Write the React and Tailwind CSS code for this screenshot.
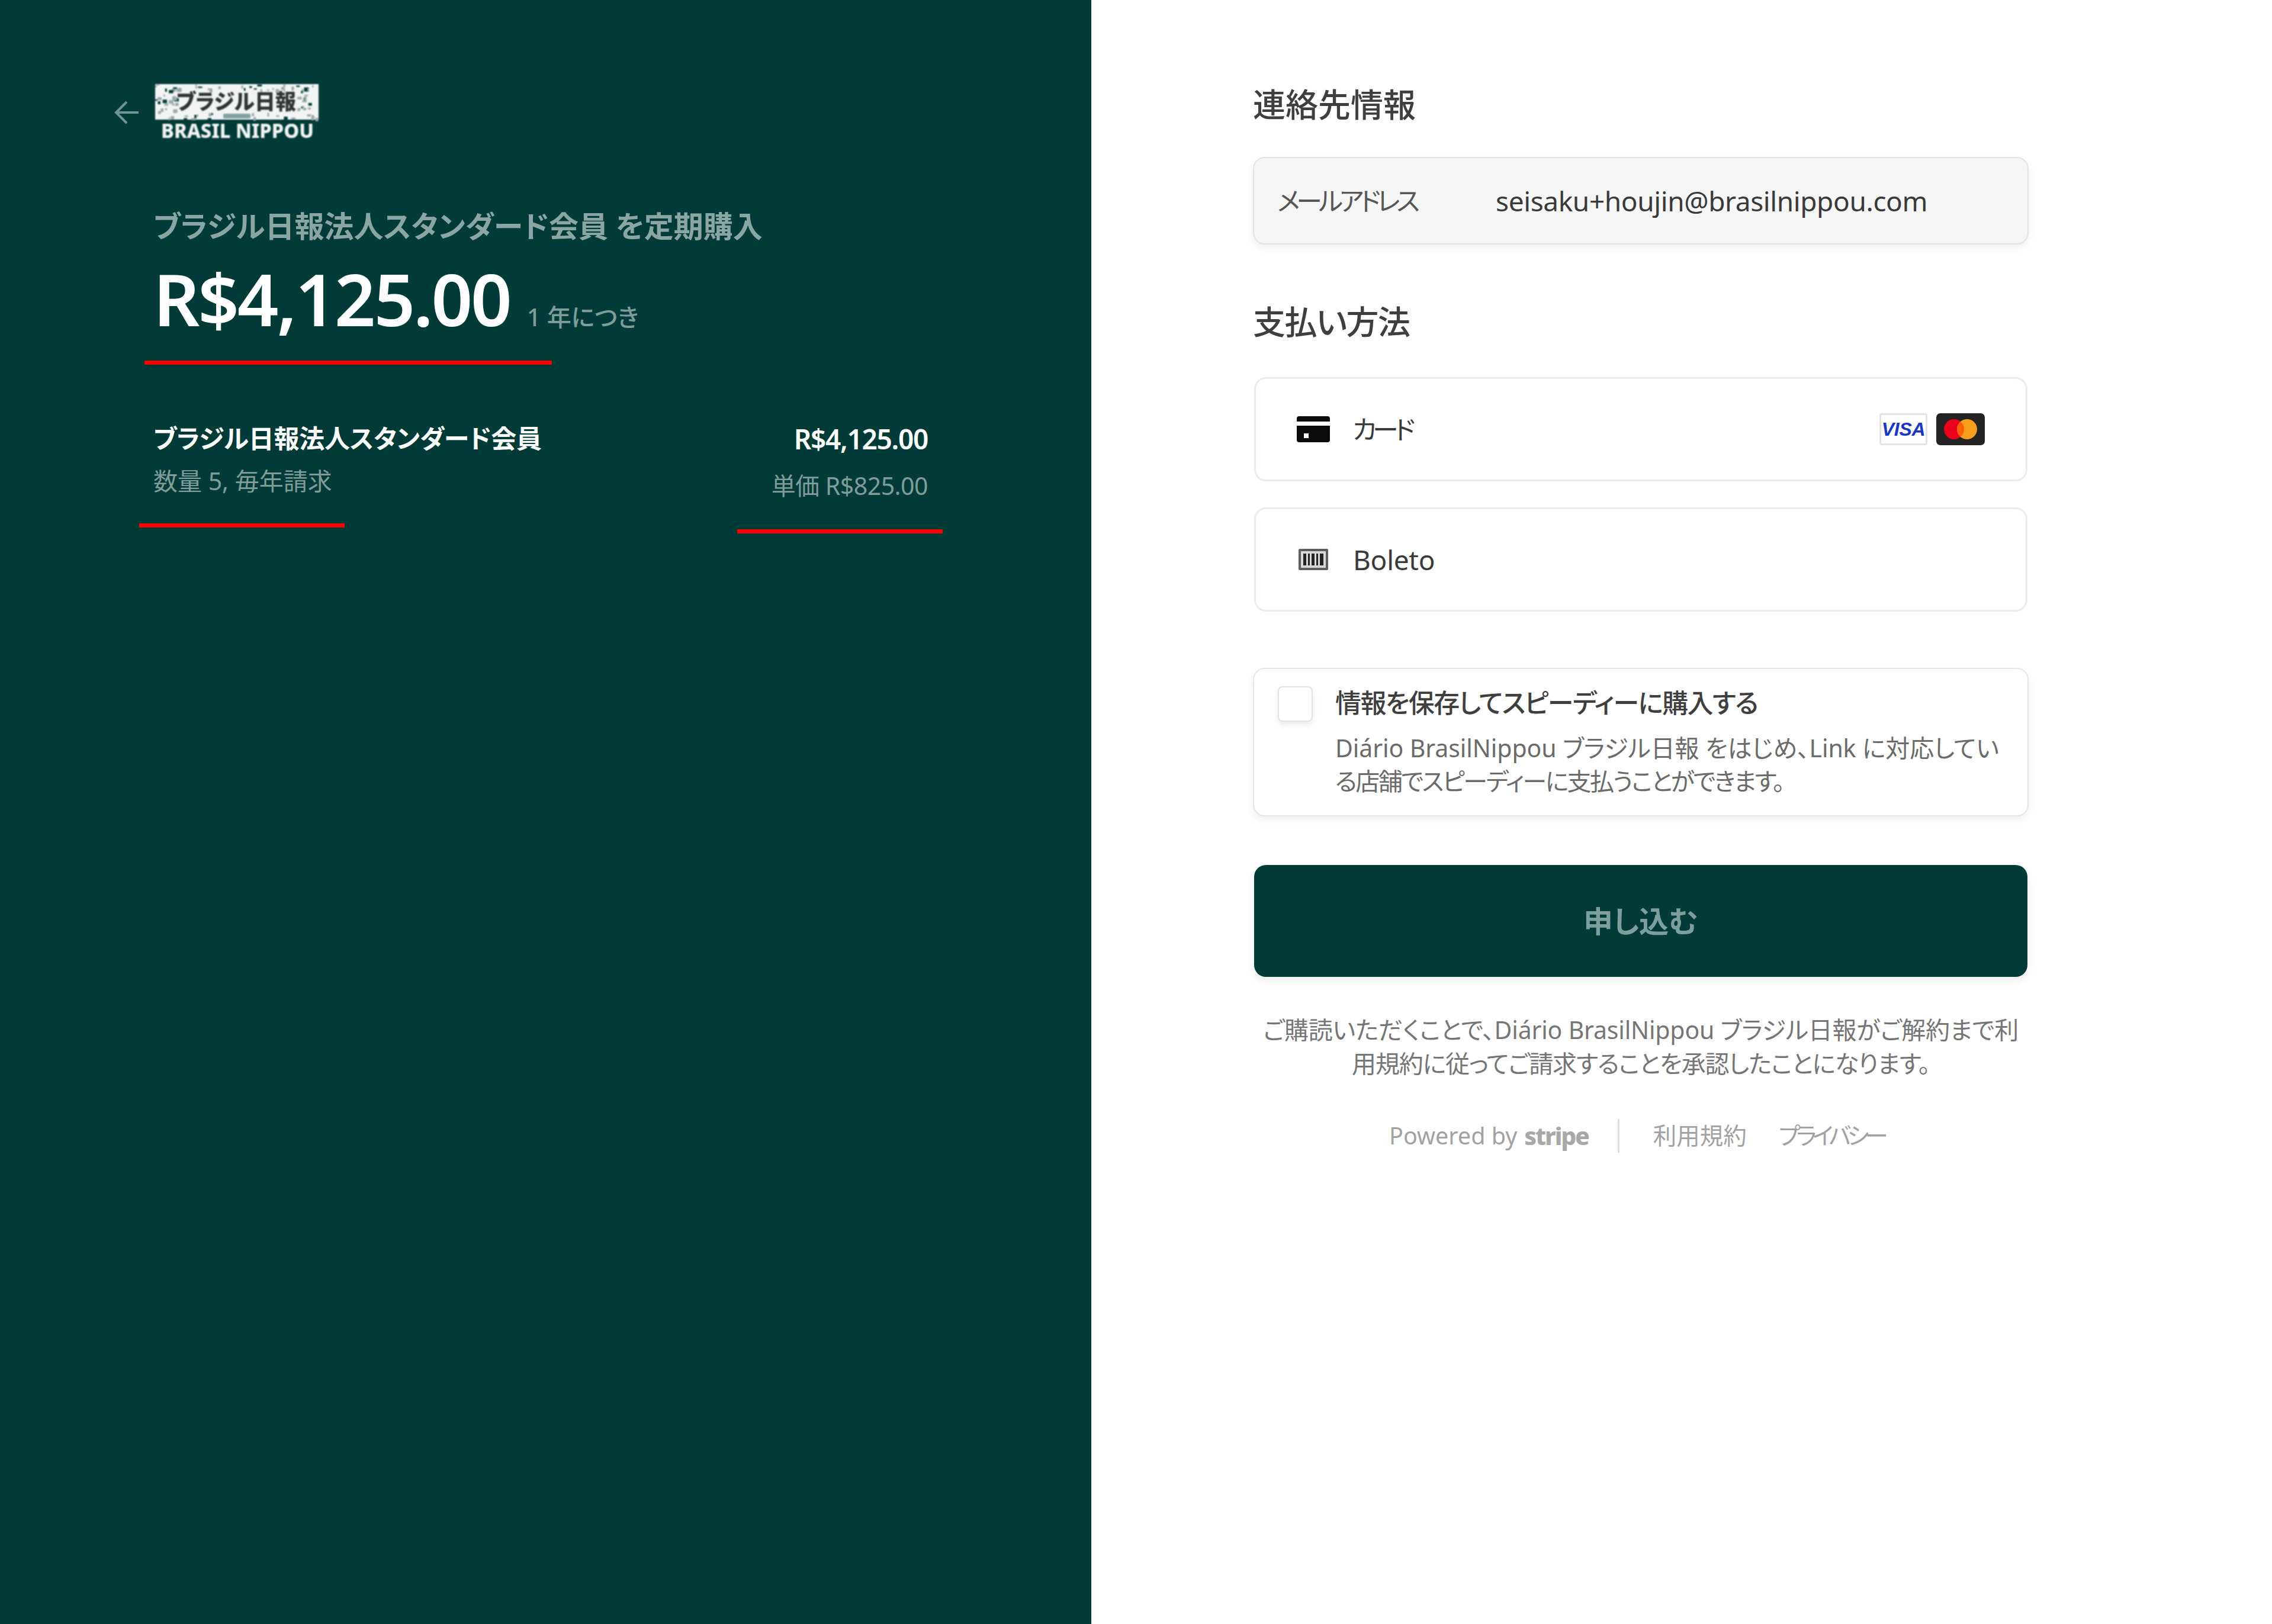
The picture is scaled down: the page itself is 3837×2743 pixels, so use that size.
import React from "react";

const font = "[font-family:'Noto_Sans','Noto_Sans_CJK_JP',sans-serif] [font-feature-settings:'palt']";

function Logo() {
  const blobs = [];
  let s = 11;
  const rnd = () => {
    s = (s * 16807) % 2147483647;
    return s / 2147483647;
  };
  for (let i = 0; i < 190; i++) {
    const x = rnd() * 272;
    const y = 2 + rnd() * 58;
    const w = 2 + rnd() * 6;
    const h = 2 + rnd() * 5;
    const c = rnd();
    if (x > 34 && x < 238 && y > 12 && y < 50) continue;
    blobs.push(<rect key={i} x={x} y={y} width={w} height={h} fill={c > 0.72 ? "#013b37" : "#9aa9a7"} />);
  }
  return (
    <svg width="278" height="104" viewBox="0 0 278 104" className="block blur-[1px]">
      <rect x="0" y="2" width="276" height="60" fill="#f2f4f3" />
      {blobs}
      <text x="36" y="45" fontSize="36" fontWeight="800" fill="#2f3534" fontFamily="'Noto Sans CJK JP',sans-serif" textLength="202" lengthAdjust="spacingAndGlyphs">ブラジル日報</text>
      <rect x="115" y="52" width="46" height="8" rx="2" fill="#7fa3a0" />
      <text x="10" y="93" fontSize="33" fontWeight="800" fill="#f2f4f3" fontFamily="'Noto Sans',sans-serif" textLength="258" lengthAdjust="spacingAndGlyphs">BRASIL NIPPOU</text>
    </svg>
  );
}

function CardIcon() {
  return (
    <svg width="56" height="44" viewBox="0 0 56 44" className="block">
      <rect width="56" height="44" rx="4" fill="#0b0b0b" />
      <rect y="9" width="56" height="7" fill="#ffffff" />
      <rect x="12" y="29" width="8" height="8" fill="#ffffff" />
    </svg>
  );
}

function BoletoIcon() {
  return (
    <svg width="50" height="36" viewBox="0 0 50 36" className="block">
      <rect width="50" height="36" rx="2" fill="#5e5e5e" />
      <rect x="4" y="4" width="42" height="28" fill="#d8d8d8" />
      <rect x="8" y="8" width="5" height="20" fill="#222" />
      <rect x="16" y="8" width="3" height="20" fill="#222" />
      <rect x="22" y="8" width="5" height="20" fill="#222" />
      <rect x="30" y="8" width="3" height="20" fill="#222" />
      <rect x="36" y="8" width="6" height="20" fill="#222" />
    </svg>
  );
}

function Visa() {
  return (
    <div className="w-[81px] h-[54px] bg-white border-[3px] border-[#e4e4e4] rounded-[4px] flex items-center justify-center">
      <span className="text-[32px] leading-none font-bold italic text-[#1a36c4] [font-family:'Liberation_Sans',sans-serif] tracking-[-0.3px]">VISA</span>
    </div>
  );
}

function Mastercard() {
  return (
    <svg width="82" height="54" viewBox="0 0 82 54" className="block">
      <rect width="82" height="54" rx="7" fill="#232323" />
      <circle cx="30" cy="27" r="17" fill="#eb001b" />
      <circle cx="52" cy="27" r="17" fill="#f79e1b" />
      <path d="M41 14 a17 17 0 0 1 0 26 a17 17 0 0 1 0 -26 z" fill="#ff5f00" />
    </svg>
  );
}

export default function App() {
  return (
    <div className={`${font} flex w-[3837px] h-[2743px] bg-white overflow-hidden`}>
      <div className="relative w-[1843px] h-full bg-[#013b37] pl-[192px] pt-[140px] shrink-0">
        <div className="flex items-start gap-[28px]">
          <svg width="42" height="40" viewBox="0 0 42 40" className="block mt-[30px]" fill="none" stroke="#6f9491" strokeWidth="4">
            <path d="M42 20 H4 M22 2 L4 20 L22 38" />
          </svg>
          <Logo />
        </div>
        <div className="ml-[67px] w-[1308px]">
          <div className="mt-[108px] text-[50px] leading-[60px] font-semibold text-[#8aa5a2]">ブラジル日報法人スタンダード会員 を定期購入</div>
          <div className="mt-[26px] flex items-baseline gap-[28px]">
            <span className="text-[122px] leading-[132px] font-semibold text-white tracking-[-3.2px]">R$4,125.00</span>
            <span className="text-[41px] leading-[50px] font-medium text-[#7f9c99]">1 年につき</span>
          </div>
          <div className="mt-[144px] flex justify-between">
            <div>
              <div className="text-[43px] leading-[54px] font-bold text-white tracking-[-0.3px]">ブラジル日報法人スタンダード会員</div>
              <div className="mt-[20px] text-[41px] leading-[48px] text-[#7f9c99]">数量 5, 毎年請求</div>
            </div>
            <div className="text-right">
              <div className="text-[46px] leading-[54px] font-semibold text-white tracking-[-1.3px]">R$4,125.00</div>
              <div className="mt-[28px] text-[41px] leading-[48px] text-[#7f9c99] tracking-[-0.5px]">単価 R$825.00</div>
            </div>
          </div>
        </div>
        <div className="absolute left-[244px] top-[609px] w-[688px] h-[7px] bg-[#ff0000]" />
        <div className="absolute left-[235px] top-[884px] w-[347px] h-[7px] bg-[#ff0000]" />
        <div className="absolute left-[1245px] top-[894px] w-[347px] h-[7px] bg-[#ff0000]" />
      </div>

      <div className="flex-1 pl-[273px] pt-[146px]">
        <div className="w-[1310px]">
          <h2 className="text-[55px] leading-[60px] font-medium text-[#3f3f3f]">連絡先情報</h2>
          <div className="mt-[59px] h-[148px] rounded-[20px] bg-[#f6f6f6] border-2 border-[#e4e4e4] shadow-[0_6px_14px_rgba(0,0,0,0.06)] flex items-center pl-[39px]">
            <span className="w-[369px] shrink-0 text-[44px] leading-[60px] text-[#565656] tracking-[-6px]">メールアドレス</span>
            <span className="text-[46px] leading-[60px] text-[#3a3a3a] tracking-[-0.4px]">seisaku+houjin@brasilnippou.com</span>
          </div>
          <h2 className="mt-[100px] text-[55px] leading-[60px] font-medium text-[#3f3f3f] tracking-[-1.5px]">支払い方法</h2>

          <div className="mt-[64px] ml-[2px] w-[1306px] h-[176px] rounded-[20px] bg-white border-[3px] border-[#ececec] flex items-center pl-[69px] pr-[69px]">
            <CardIcon />
            <span className="ml-[38px] text-[44px] leading-[60px] text-[#3a3a3a] tracking-[-6.5px]">カード</span>
            <div className="ml-auto flex items-center gap-[15px]">
              <Visa />
              <Mastercard />
            </div>
          </div>
          <div className="mt-[44px] ml-[2px] w-[1306px] h-[176px] rounded-[20px] bg-white border-[3px] border-[#ececec] flex items-center pl-[72px]">
            <BoletoIcon />
            <span className="ml-[42px] text-[46px] leading-[60px] text-[#3a3a3a] tracking-[-0.3px]">Boleto</span>
          </div>

          <div className="mt-[95px] h-[251px] rounded-[20px] bg-white border-2 border-[#e6e6e6] shadow-[0_6px_14px_rgba(0,0,0,0.06)] flex items-start pl-[40px] pt-[29px]">
            <div className="w-[59px] h-[60px] rounded-[8px] bg-white border-2 border-[#e4e4e4] shadow-[0_5px_10px_rgba(0,0,0,0.08)] shrink-0" />
            <div className="ml-[38px] w-[1190px]">
              <div className="text-[44px] leading-[56px] font-medium text-[#3f3f3f] tracking-[-1.6px]">情報を保存してスピーディーに購入する</div>
              <div className="mt-[20px] text-[41px] leading-[56px] text-[#6b6b6b] whitespace-nowrap tracking-[-0.1px]">Diário BrasilNippou ブラジル日報 をはじめ、Link に対応してい<br /><span className="tracking-[-2.5px]">る店舗でスピーディーに支払うことができます。</span></div>
            </div>
          </div>

          <button className="block mt-[82px] ml-[2px] w-[1306px] h-[189px] rounded-[20px] bg-[#013b37] shadow-[0_6px_14px_rgba(0,0,0,0.08)] text-[50px] leading-[60px] font-semibold text-[#7d9e9a]">申し込む</button>

          <p className="mt-[61px] text-center text-[41px] leading-[57px] text-[#767676] tracking-[-0.2px] whitespace-nowrap">ご購読いただくことで、Diário BrasilNippou ブラジル日報がご解約まで利<br /><span className="tracking-[-1.1px]">用規約に従ってご請求することを承認したことになります。</span></p>

          <div className="mt-[64px] ml-[230px] flex items-center text-[39.5px] leading-[58px] text-[#a2a2a2]">
            <span>Powered by</span>
            <span className="ml-[12px] font-extrabold text-[41px] tracking-[-2.2px] text-[#a8a8a8]">stripe</span>
            <span className="ml-[49px] w-[3px] h-[57px] bg-[#dcdcdc]" />
            <span className="ml-[57px]">利用規約</span>
            <span className="ml-[54px] tracking-[-6.5px]">プライバシー</span>
          </div>
        </div>
      </div>
    </div>
  );
}
